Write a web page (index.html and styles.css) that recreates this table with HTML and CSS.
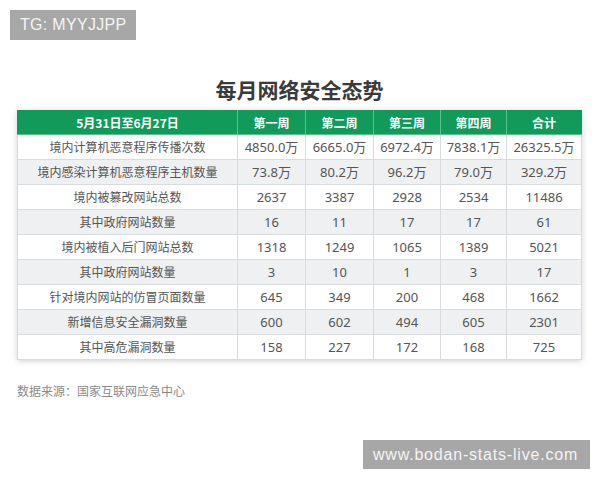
FILE: index.html
```html
<!DOCTYPE html>
<html lang="zh">
<head>
<meta charset="utf-8">
<link rel="stylesheet" href="styles.css">
</head>
<body>
<div class="tag tag-top">TG: MYYJJPP</div>
<main class="page">
  <h1 class="title">每月网络安全态势</h1>
  <table class="stats">
    <thead>
      <tr><th>5月31日至6月27日</th><th>第一周</th><th>第二周</th><th>第三周</th><th>第四周</th><th>合计</th></tr>
    </thead>
    <tbody>
      <tr><td>境内计算机恶意程序传播次数</td><td>4850.0万</td><td>6665.0万</td><td>6972.4万</td><td>7838.1万</td><td>26325.5万</td></tr>
      <tr><td>境内感染计算机恶意程序主机数量</td><td>73.8万</td><td>80.2万</td><td>96.2万</td><td>79.0万</td><td>329.2万</td></tr>
      <tr><td>境内被篡改网站总数</td><td>2637</td><td>3387</td><td>2928</td><td>2534</td><td>11486</td></tr>
      <tr><td>其中政府网站数量</td><td>16</td><td>11</td><td>17</td><td>17</td><td>61</td></tr>
      <tr><td>境内被植入后门网站总数</td><td>1318</td><td>1249</td><td>1065</td><td>1389</td><td>5021</td></tr>
      <tr><td>其中政府网站数量</td><td>3</td><td>10</td><td>1</td><td>3</td><td>17</td></tr>
      <tr><td>针对境内网站的仿冒页面数量</td><td>645</td><td>349</td><td>200</td><td>468</td><td>1662</td></tr>
      <tr><td>新增信息安全漏洞数量</td><td>600</td><td>602</td><td>494</td><td>605</td><td>2301</td></tr>
      <tr><td>其中高危漏洞数量</td><td>158</td><td>227</td><td>172</td><td>168</td><td>725</td></tr>
    </tbody>
  </table>
  <p class="source">数据来源：国家互联网应急中心</p>
</main>
<div class="tag tag-bottom">www.bodan-stats-live.com</div>
</body>
</html>
```

FILE: styles.css
```css
html, body {
  margin: 0;
  padding: 0;
  background: #ffffff;
}
body {
  width: 600px;
  height: 480px;
  position: relative;
  overflow: hidden;
  font-family: "Noto Sans", "Noto Sans CJK SC", sans-serif;
}
.page {
  padding: 76px 18px 0 17px;
}
.title {
  margin: 0 0 8px 0;
  text-align: center;
  font-family: "Noto Sans CJK SC", sans-serif;
  font-size: 21px;
  font-weight: 700;
  line-height: 26px;
  color: #3a3a3a;
}
.stats {
  width: 565px;
  border-collapse: collapse;
  table-layout: fixed;
  box-shadow: 0 1px 6px rgba(0, 0, 0, 0.18);
}
.stats th, .stats td {
  padding: 0;
  text-align: center;
  border: 1px solid #d9dcdf;
}
.stats th {
  height: 23px;
  background: #129a5b;
  color: #ffffff;
  font-family: "Noto Sans CJK SC", sans-serif;
  font-size: 12px;
  font-weight: 700;
  border-color: #5fbf8f;
  border-top-color: #129a5b;
}
.stats th:first-child { width: 219px; border-left-color: #129a5b; }
.stats th:nth-child(2) { width: 67px; }
.stats th:nth-child(3) { width: 67px; }
.stats th:nth-child(4) { width: 66px; }
.stats th:nth-child(5) { width: 65px; }
.stats th:last-child { border-right-color: #129a5b; }
.stats td {
  height: 24px;
  color: #555555;
  font-size: 13px;
  line-height: 16px;
}
.stats td:first-child {
  font-family: "Noto Sans CJK SC", sans-serif;
  font-size: 12px;
}
.stats tbody tr:nth-child(even) td {
  background: #eef0f2;
}
.source {
  margin: 22px 0 0 0;
  font-family: "Noto Sans CJK SC", sans-serif;
  font-size: 12px;
  color: #8a8a8a;
}
.tag {
  position: absolute;
  background: #a7a7a7;
  color: #f4f4f4;
  font-family: "Liberation Sans", sans-serif;
  font-size: 16px;
  line-height: 30px;
  padding: 0 10px;
  white-space: nowrap;
}
.tag-top {
  left: 10px;
  top: 10px;
  height: 30px;
  letter-spacing: 0.3px;
}
.tag-bottom {
  left: 363px;
  top: 440px;
  width: 207px;
  height: 29px;
  line-height: 29px;
  letter-spacing: 0.8px;
}
```
